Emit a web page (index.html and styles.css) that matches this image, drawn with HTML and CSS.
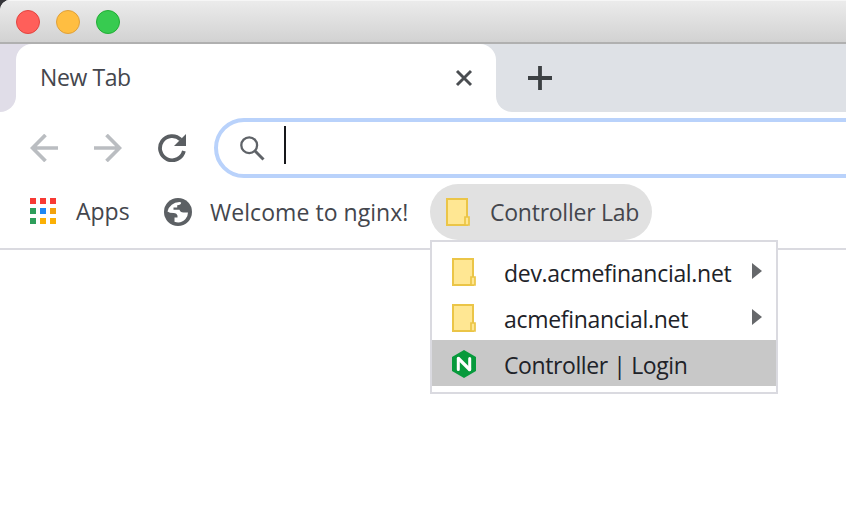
FILE: index.html
```html
<!DOCTYPE html>
<html lang="en">
<head>
<meta charset="utf-8">
<title>New Tab</title>
<link rel="stylesheet" href="styles.css">
</head>
<body>
<div class="window">
  <header class="titlebar"><i class="light red"></i><i class="light yellow"></i><i class="light green"></i></header>
  <div class="tabs">
    <div class="tabs-left"></div>
    <div class="tab"><span class="label t-tab">New Tab</span>
      <svg class="close" width="18" height="18" viewBox="0 0 18 18"><path d="M2 2l14 14M16 2L2 16" stroke="#4a4d51" stroke-width="2.9"/></svg>
    </div>
    <div class="tabs-right">
      <svg width="24" height="24" viewBox="0 0 24 24"><path d="M12 0v24M0 12h24" stroke="#3c4043" stroke-width="3.800"/></svg>
    </div>
  </div>
  <div class="toolbar">
    <svg width="28" height="28" viewBox="0 0 28 28" fill="none" stroke="#babdc1" stroke-width="3.7"><path d="M28 14H3M15.500 1L2.500 14l13 13"/></svg>
    <svg width="28" height="28" viewBox="0 0 28 28" fill="none" stroke="#babdc1" stroke-width="3.7"><path d="M0 14h25M12.500 1l13 13-13 13"/></svg>
    <svg width="28" height="28" viewBox="0 0 28 28"><path d="M22.800 5.700A12.100 12.100 0 1 0 25.900 17" fill="none" stroke="#5a5e62" stroke-width="3.800"/><path d="M28 0v12H16z" fill="#5a5e62"/></svg>
    <div class="omnibox">
      <svg width="25" height="25" viewBox="0 0 25 25" fill="none" stroke="#5f6368"><circle cx="9.200" cy="9.200" r="7.900" stroke-width="2.300"/><path d="M14.800 14.800l8.700 8.700" stroke-width="3"/></svg>
      <i class="caret"></i>
    </div>
  </div>
  <nav class="bookmarks">
    <div class="bookmark apps">
      <svg width="26" height="26" viewBox="0 0 26 26"><path d="M0 0h6v6H0zM10 0h6v6h-6zM20 0h6v6h-6z" fill="#f83a34"/><path d="M0 10h6v6H0zM0 20h6v6H0z" fill="#2e9e5b"/><path d="M10 10h6v6h-6z" fill="#1e88f5"/><path d="M20 10h6v6h-6z" fill="#f2a20c"/><path d="M10 20h6v6h-6zM20 20h6v6h-6z" fill="#fbb005"/></svg>
      <span class="label t-apps">Apps</span>
    </div>
    <div class="bookmark nginx">
      <svg width="28" height="28" viewBox="0 0 28 28"><circle cx="14" cy="14" r="14" fill="#5c6064"/><path d="M15.500 4Q6 4.500 3.500 13.500q2 1.500 6 1.500 3.500.3 4 2.800v1.700h-3v4.300q6.500 2.200 11-2.800 2.500-3 2.500-6.500h-4.500q-3.500-.2-4-2.700H9.500V9.500h3.700V7.200q3.800 0 4-2.700z" fill="#fff"/></svg>
      <span class="label t-nginx">Welcome to nginx!</span>
    </div>
    <div class="bookmark active">
      <svg width="24" height="28" viewBox="0 0 24 28"><path d="M1 1h20v26H1z" fill="#ffe793" stroke="#ebc547" stroke-width="2"/><path d="M19 19h4v8h-4z" fill="#ffe793" stroke="#ebc547" stroke-width="1.700"/></svg>
      <span class="label t-lab">Controller Lab</span>
      <div class="menu">
        <div class="item"><svg width="24" height="28" viewBox="0 0 24 28"><path d="M1 1h20v26H1z" fill="#ffe793" stroke="#ebc547" stroke-width="2"/><path d="M19 19h4v8h-4z" fill="#ffe793" stroke="#ebc547" stroke-width="1.700"/></svg><span class="label t-dev">dev.acmefinancial.net</span><i class="more"></i></div>
        <div class="item"><svg width="24" height="28" viewBox="0 0 24 28"><path d="M1 1h20v26H1z" fill="#ffe793" stroke="#ebc547" stroke-width="2"/><path d="M19 19h4v8h-4z" fill="#ffe793" stroke="#ebc547" stroke-width="1.700"/></svg><span class="label t-acme">acmefinancial.net</span><i class="more"></i></div>
        <div class="item selected"><svg width="24" height="28" viewBox="0 0 24 28"><path d="M12 0l12 7v14l-12 7-12-7V7z" fill="#079a3c"/><path d="M6.300 19.500V8.500M17.700 8.500v11" stroke="#fff" stroke-width="3" stroke-linecap="round"/><path d="M6.500 8.500l11 11" stroke="#fff" stroke-width="3.200" stroke-linecap="round"/></svg><span class="label t-login">Controller | Login</span></div>
      </div>
    </div>
  </nav>
</div>
</body>
</html>
```
FILE: styles.css
```css
* { box-sizing: border-box; }
html { background: #36363a; }
body { margin: 0; font: 23px/32px "Open Sans", "Noto Sans", sans-serif; color: #44464d; }
svg { display: block; flex: none; }
.window { height: 518px; overflow: hidden; background: #fff; border-top-left-radius: 10px; }
.titlebar { position: relative; z-index: 1; height: 44px; display: flex; gap: 16px; padding: 10px 16px; background: linear-gradient(#ececec, #d2d2d2); border-bottom: 2px solid #b0b0b0; box-shadow: inset 0 1px #f6f6f6; }
.light { width: 24px; height: 24px; border-radius: 50%; border: 1px solid; }
.red { background: #ff5f5a; border-color: #e2443f; }
.yellow { background: #ffbe41; border-color: #dfa03a; }
.green { background: #37cb50; border-color: #22ad35; }
.tabs { height: 68px; display: flex; background: #fff; }
.tabs-left { width: 16px; background: #e0dde8; border-bottom-right-radius: 16px; box-shadow: 16px -34px #e0dde8; }
.tab { position: relative; width: 480px; display: flex; align-items: center; justify-content: space-between; padding: 0 23px 0 24px; background: #fff; border-radius: 16px 16px 0 0; }
.tabs-right { flex: 1; display: flex; align-items: center; padding-left: 32px; background: #dee1e6; border-bottom-left-radius: 16px; box-shadow: -16px -34px #dee1e6; }
.toolbar { height: 72px; display: flex; align-items: center; gap: 36px; padding-left: 30px; }
.omnibox { flex: 1; height: 60px; margin: 0 -40px 0 -8px; display: flex; align-items: center; gap: 19px; padding-left: 22px; border: 4px solid #b9d2fb; border-radius: 30px; }
.caret { width: 2px; height: 38px; background: #17181b; margin-top: -6px; }
.bookmarks { height: 66px; display: flex; align-items: flex-start; border-bottom: 2px solid #dadae0; }
.bookmark { height: 56px; display: flex; align-items: center; }
.label { white-space: nowrap; }
.apps { width: 164px; padding-left: 30px; gap: 20px; padding-bottom: 2px; }
.nginx { width: 266px; gap: 18px; }
.active { position: relative; width: 222px; gap: 20px; padding-left: 16px; border-radius: 28px; background: #e1e1e1; }
.menu { position: absolute; top: 56px; left: 0; width: 348px; height: 154px; padding: 6px 0; border: 2px solid #dadae0; background: #fff; color: #202228; }
.item { height: 46px; display: flex; align-items: center; padding: 2px 14px 0 20px; }
.item .label { margin-left: 28px; padding-top: 2px; }
.selected { background: #c8c8c8; }
.more { margin: 0 0 2px auto; border: solid transparent; border-width: 8px 0 8px 10px; border-left-color: #66686b; }
.t-tab { letter-spacing: -.4px; padding-bottom: 2px; }
.t-lab { letter-spacing: -.25px; padding-bottom: 1px; }
.t-nginx { letter-spacing: .05px; padding-bottom: 1px; }
.t-dev, .t-acme { letter-spacing: -.3px; }
.t-login { letter-spacing: -.4px; }
```
